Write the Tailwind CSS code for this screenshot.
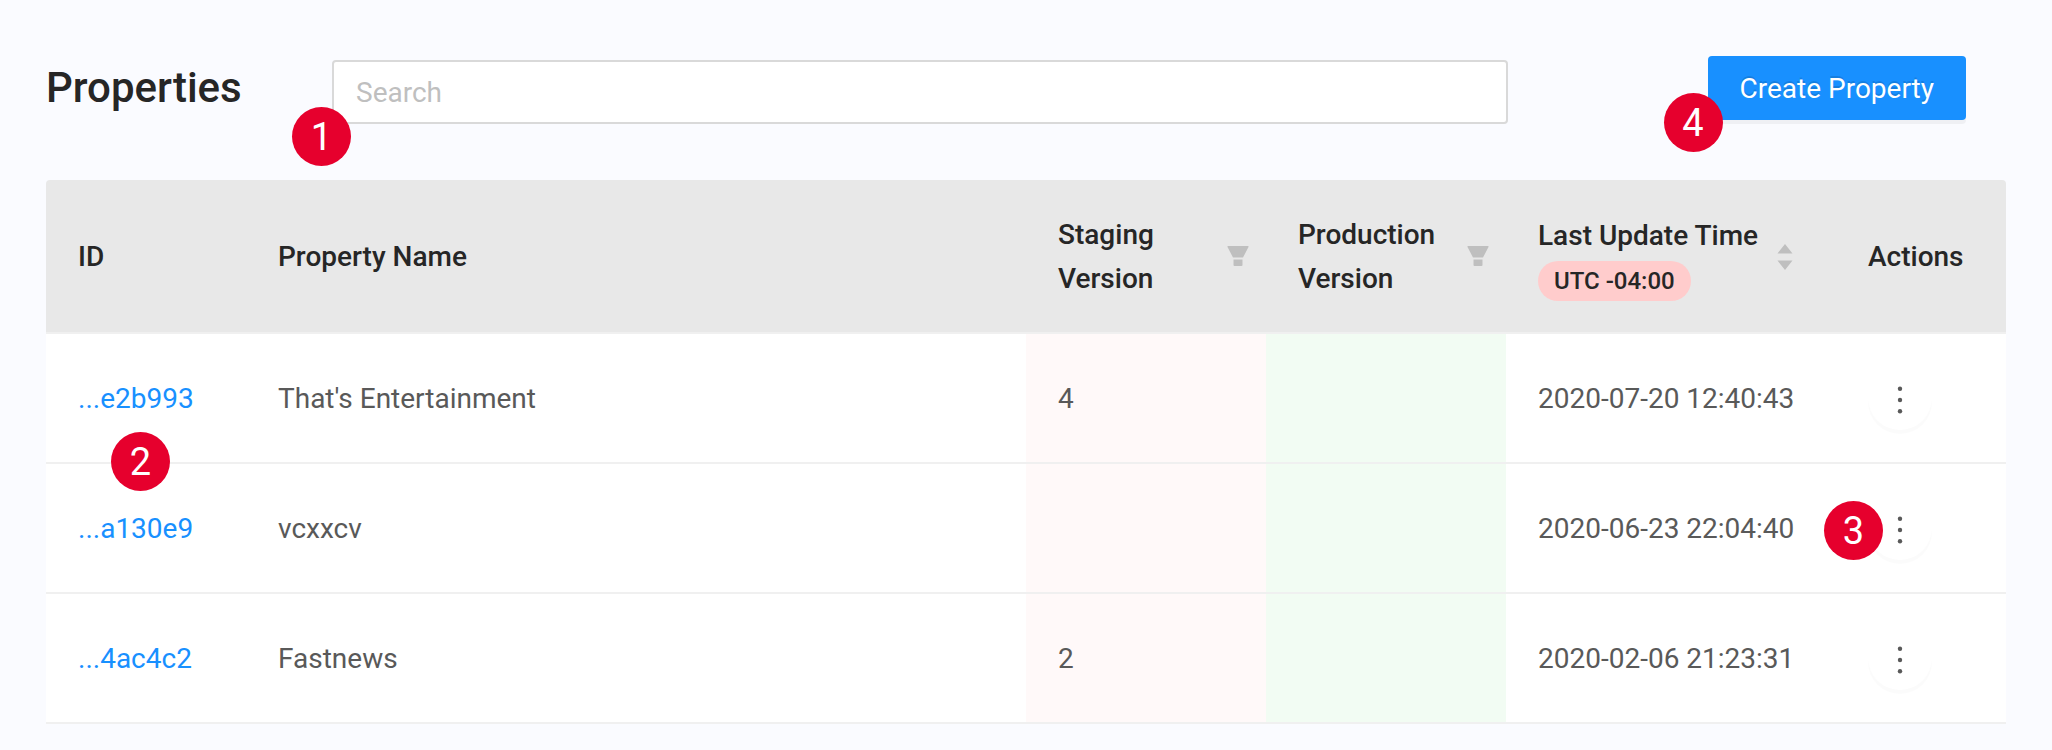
<!DOCTYPE html>
<html lang="en">
<head>
<meta charset="utf-8">
<title>Properties</title>
<script src="https://cdn.jsdelivr.net/npm/@tailwindcss/browser@4"></script>
</head>
<body class="min-h-screen bg-[#fafbff] font-[Roboto,sans-serif] text-[28px] leading-[44px] text-[#595959]">
<main class="px-[46px] pt-14 pb-7">
  <header class="flex items-start pr-10">
    <h1 class="w-[286px] shrink-0 text-[42px] leading-[64px] font-medium text-[#262626]">Properties</h1>
    <div class="relative mt-1 mr-[200px] flex-1">
      <input type="search" aria-label="Search" placeholder="Search" class="block h-16 w-full rounded-[4px] border-2 border-[#d9d9d9] bg-white px-[22px] placeholder:text-[#bfbfbf] outline-none">
      <span class="absolute top-[47px] -left-10 flex size-[59px] items-center justify-center rounded-full bg-[#e6002d] text-[38px] text-white">1</span>
    </div>
    <div class="relative">
      <button type="button" class="block h-16 rounded-[4px] bg-[#1890ff] px-8 pt-0.5 text-white shadow-[0_4px_0_rgba(0,0,0,0.045)] text-shadow-[0_-2px_0_rgba(0,0,0,0.12)]">Create Property</button>
      <span class="absolute top-[37px] -left-11 flex size-[59px] items-center justify-center rounded-full bg-[#e6002d] text-[38px] text-white">4</span>
    </div>
  </header>

  <table class="mt-14 w-full table-fixed border-separate border-spacing-0 text-left">
    <colgroup>
      <col class="w-[200px]"><col><col class="w-60"><col class="w-60"><col class="w-[330px]"><col class="w-[170px]">
    </colgroup>
    <thead class="text-[#262626]">
      <tr class="h-[154px] *:border-b-2 *:border-[#f0f0f0] *:bg-[#e8e8e8] *:px-8 *:pt-0.5 *:pb-0 *:font-medium">
        <th scope="col" class="rounded-tl-[4px]">ID</th>
        <th scope="col">Property Name</th>
        <th scope="col">
          <div class="-mr-[15px] flex items-center justify-between">
            <span class="w-[120px]">Staging Version</span>
            <button type="button" aria-label="Filter staging version" class="pb-0.5"><svg class="block h-5 w-[22px]" viewBox="0 0 22 20" fill="#bfbfbf"><path d="M1 0H21Q22 0 21.500 1L16 11.500H6L.5 1Q0 0 1 0ZM6.500 13.500H15.500V19Q15.500 20 14.500 20H7.500Q6.500 20 6.500 19Z"/></svg></button>
          </div>
        </th>
        <th scope="col">
          <div class="-mr-[15px] flex items-center justify-between">
            <span class="w-[140px]">Production Version</span>
            <button type="button" aria-label="Filter production version" class="pb-0.5"><svg class="block h-5 w-[22px]" viewBox="0 0 22 20" fill="#bfbfbf"><path d="M1 0H21Q22 0 21.500 1L16 11.500H6L.5 1Q0 0 1 0ZM6.500 13.500H15.500V19Q15.500 20 14.500 20H7.500Q6.500 20 6.500 19Z"/></svg></button>
          </div>
        </th>
        <th scope="col">
          <div class="-mr-4 flex items-center gap-[19px]">
            <div class="flex flex-col items-start">
              <span class="whitespace-nowrap">Last Update Time</span>
              <span class="mt-[3px] rounded-full bg-[#ffcccc] px-4 text-[24px] leading-10">UTC -04:00</span>
            </div>
            <button type="button" aria-label="Sort by last update time"><svg class="block h-[26px] w-4" viewBox="0 0 16 26" fill="#bfbfbf"><path d="M8 0L15.500 9.500H.5ZM8 26L15.500 16.500H.5Z"/></svg></button>
          </div>
        </th>
        <th scope="col" class="rounded-tr-[4px]">Actions</th>
      </tr>
    </thead>
    <tbody>
      <tr class="h-[130px] *:border-b-2 *:border-[#f0f0f0] *:px-8 *:py-0 [&>:not(:last-child)]:pt-0.5">
        <td class="relative bg-white"><a href="#" class="text-[#1890ff]">...e2b993</a>
          <span class="absolute top-[98px] left-[65px] z-10 flex size-[59px] items-center justify-center rounded-full bg-[#e6002d] text-[38px] text-white">2</span></td>
        <td class="bg-white">That's Entertainment</td>
        <td class="bg-[#fff9f9]">4</td>
        <td class="bg-[#f2fcf3]"></td>
        <td class="bg-white whitespace-nowrap">2020-07-20 12:40:43</td>
        <td class="bg-white"><button type="button" aria-label="Actions for That's Entertainment" class="flex size-16 items-center justify-center rounded-full bg-white shadow-[0_4px_0_rgba(0,0,0,0.016)]"><svg class="mt-1 h-7 w-2" viewBox="0 0 8 28" fill="#595959"><circle cx="4" cy="2.700" r="2.200"/><circle cx="4" cy="14" r="2.200"/><circle cx="4" cy="25.300" r="2.200"/></svg></button></td>
      </tr>
      <tr class="h-[130px] *:border-b-2 *:border-[#f0f0f0] *:px-8 *:py-0 [&>:not(:last-child)]:pt-0.5">
        <td class="bg-white"><a href="#" class="text-[#1890ff]">...a130e9</a></td>
        <td class="bg-white">vcxxcv</td>
        <td class="bg-[#fff9f9]"></td>
        <td class="bg-[#f2fcf3]"></td>
        <td class="bg-white whitespace-nowrap">2020-06-23 22:04:40</td>
        <td class="relative bg-white"><button type="button" aria-label="Actions for vcxxcv" class="flex size-16 items-center justify-center rounded-full bg-white shadow-[0_4px_0_rgba(0,0,0,0.016)]"><svg class="mt-1 h-7 w-2" viewBox="0 0 8 28" fill="#595959"><circle cx="4" cy="2.700" r="2.200"/><circle cx="4" cy="14" r="2.200"/><circle cx="4" cy="25.300" r="2.200"/></svg></button>
          <span class="absolute top-[37px] -left-3 flex size-[59px] items-center justify-center rounded-full bg-[#e6002d] text-[38px] text-white">3</span></td>
      </tr>
      <tr class="h-[130px] *:border-b-2 *:border-[#f0f0f0] *:px-8 *:py-0 [&>:not(:last-child)]:pt-0.5">
        <td class="bg-white"><a href="#" class="text-[#1890ff]">...4ac4c2</a></td>
        <td class="bg-white">Fastnews</td>
        <td class="bg-[#fff9f9]">2</td>
        <td class="bg-[#f2fcf3]"></td>
        <td class="bg-white whitespace-nowrap">2020-02-06 21:23:31</td>
        <td class="bg-white"><button type="button" aria-label="Actions for Fastnews" class="flex size-16 items-center justify-center rounded-full bg-white shadow-[0_4px_0_rgba(0,0,0,0.016)]"><svg class="mt-1 h-7 w-2" viewBox="0 0 8 28" fill="#595959"><circle cx="4" cy="2.700" r="2.200"/><circle cx="4" cy="14" r="2.200"/><circle cx="4" cy="25.300" r="2.200"/></svg></button></td>
      </tr>
    </tbody>
  </table>
</main>
</body>
</html>
